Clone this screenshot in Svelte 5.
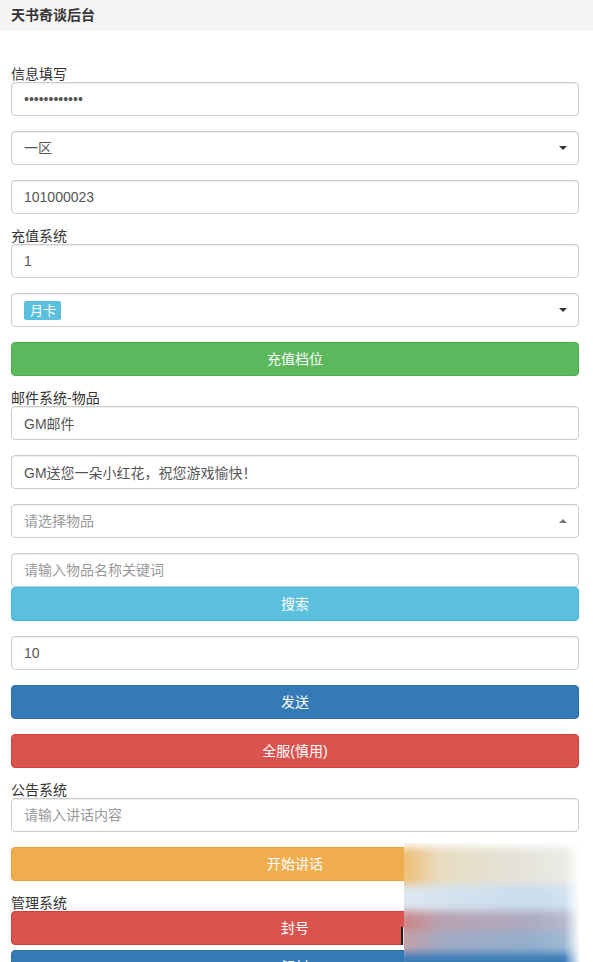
<script>
	// blurred patch at the bottom right: vertical bands, softened by the blur on .smear-inner
	const bands = [
		{ h: 38, bg: 'linear-gradient(90deg, #f0b868, #e8dcc0 22%, #e4e2d8 60%, #eeeeea)' },
		{ h: 26, bg: 'linear-gradient(90deg, #dfe9f2, #d3e2ef 30%, #c9ddee 70%, #d6e5f2)' },
		{ h: 20, bg: 'linear-gradient(90deg, #d0807c, #b8a2b2 22%, #aeaac0 70%, #bcc2d6)' },
		{ h: 22, bg: 'linear-gradient(90deg, #c8a0a4, #a0aac4 25%, #94aecc 70%, #a8c0da)' },
		{ h: 20, bg: '#3a7cb8' }
	];
</script>

<div class="page">
	<header class="head">天书奇谈后台</header>

	<form class="form">
		<span class="label">信息填写</span>
		<input class="field gap" type="password" value="abcdefghijkl" />
		<div class="field gap select">一区<i class="caret"></i></div>
		<input class="field gap" value="101000023" />

		<span class="label">充值系统</span>
		<input class="field gap" value="1" />
		<div class="field gap select"><span class="tag">月卡</span><i class="caret"></i></div>
		<button type="button" class="btn gap success">充值档位</button>

		<span class="label">邮件系统-物品</span>
		<input class="field gap" value="GM邮件" />
		<input class="field gap" value="GM送您一朵小红花，祝您游戏愉快！" />
		<div class="field gap select muted">请选择物品<i class="caret up"></i></div>
		<input class="field" placeholder="请输入物品名称关键词" />
		<button type="button" class="btn gap info">搜索</button>
		<input class="field gap" value="10" />
		<button type="button" class="btn gap primary">发送</button>
		<button type="button" class="btn gap danger">全服(慎用)</button>

		<span class="label">公告系统</span>
		<input class="field gap" placeholder="请输入讲话内容" />
		<button type="button" class="btn gap warning">开始讲话</button>

		<span class="label">管理系统</span>
		<button type="button" class="btn tight danger">封号</button>
		<button type="button" class="btn gap primary">解封</button>
	</form>

	<div class="smear">
		<div class="smear-inner">
			{#each bands as band}
				<div style="height: {band.h}px; background: {band.bg}"></div>
			{/each}
		</div>
	</div>
	<i class="cursor"></i>
</div>

<style>
	:global(body) {
		margin: 0;
		background: #fff;
	}

	.page {
		position: relative;
		height: 962px;
		overflow: hidden;
		font-family: 'Liberation Sans', 'Noto Sans CJK SC', sans-serif;
		font-size: 14px;
		color: #333;
	}

	.head {
		height: 31px;
		padding-left: 11px;
		background: #f5f5f5;
		font-weight: 700;
		line-height: 31px;
	}

	.form {
		display: flex;
		flex-direction: column;
		padding: 36px 14px 0 11px;
	}

	.label {
		height: 15px;
		line-height: 15px;
	}

	.gap {
		margin-bottom: 15px;
	}

	.tight {
		margin-bottom: 5px;
	}

	.field {
		box-sizing: border-box;
		width: 100%;
		height: 34px;
		padding: 6px 12px;
		border: 1px solid #ccc;
		border-radius: 4px;
		box-shadow: inset 0 1px 1px rgba(0, 0, 0, 0.075);
		background: #fff;
		color: #555;
		font: inherit;
		line-height: 20px;
	}

	.field::placeholder,
	.muted {
		color: #999;
	}

	.select {
		display: flex;
		align-items: center;
		justify-content: space-between;
	}

	.caret {
		width: 0;
		height: 0;
		margin-right: -1px;
		border: 4px solid transparent;
		border-top-color: #333;
		border-bottom: 0;
	}

	.caret.up {
		border: 4px solid transparent;
		border-bottom-color: #777;
		border-top: 0;
	}

	.tag {
		padding: 0 5px 0 6px;
		border-radius: 2px;
		background: #5bc0de;
		color: #fff;
		font-size: 13px;
		line-height: 19px;
	}

	.btn {
		flex: none;
		width: 100%;
		height: 34px;
		padding: 0 0 2px;
		border: 1px solid transparent;
		border-radius: 4px;
		color: #fff;
		font: inherit;
	}

	.success { background: #5cb85c; border-color: #4cae4c; }
	.info { background: #5bc0de; border-color: #46b8da; }
	.primary { background: #337ab7; border-color: #2e6da4; }
	.danger { background: #d9534f; border-color: #d43f3a; }
	.warning { background: #f0ad4e; border-color: #eea236; }

	/* covers the lower right corner of the buttons in the screenshot */
	.smear {
		position: absolute;
		top: 843px;
		left: 404px;
		width: 178px;
		height: 119px;
		overflow: hidden;
		background: #fff;
	}

	.smear::after {
		content: '';
		position: absolute;
		inset: 0;
		background: linear-gradient(90deg, transparent 90%, #fff 99%);
	}

	.smear-inner {
		margin: 4px -6px 0;
		filter: blur(4px);
	}

	.cursor {
		position: absolute;
		top: 927px;
		left: 401px;
		width: 2px;
		height: 18px;
		background: #222;
		box-shadow: 1px 0 0 #ddd;
	}
</style>
